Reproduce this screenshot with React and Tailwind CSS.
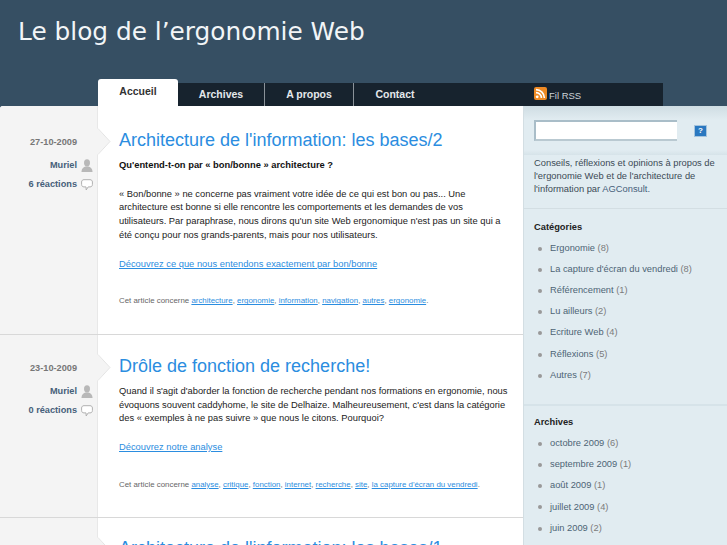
import React from "react";

const posts = [
  {
    date: "27-10-2009",
    reactions: "6 réactions",
    title: "Architecture de l'information: les bases/2",
    lead: "Qu'entend-t-on par « bon/bonne » architecture ?",
    text: "« Bon/bonne » ne concerne pas vraiment votre idée de ce qui est bon ou pas... Une\narchitecture est bonne si elle rencontre les comportements et les demandes de vos\nutilisateurs. Par paraphrase, nous dirons qu'un site Web ergonomique n'est pas un site qui a\nété conçu pour nos grands-parents, mais pour nos utilisateurs.",
    more: "Découvrez ce que nous entendons exactement par bon/bonne",
    tags: ["architecture", "ergonomie", "information", "navigation", "autres", "ergonomie"],
  },
  {
    date: "23-10-2009",
    reactions: "0 réactions",
    title: "Drôle de fonction de recherche!",
    text: "Quand il s'agit d'aborder la fonction de recherche pendant nos formations en ergonomie, nous\névoquons souvent caddyhome, le site de Delhaize. Malheureusement, c'est dans la catégorie\ndes « exemples à ne pas suivre » que nous le citons. Pourquoi?",
    more: "Découvrez notre analyse",
    tags: ["analyse", "critique", "fonction", "internet", "recherche", "site", "la capture d'écran du vendredi"],
  },
];

const categories = [
  ["Ergonomie", 8],
  ["La capture d'écran du vendredi", 8],
  ["Référencement", 1],
  ["Lu ailleurs", 2],
  ["Ecriture Web", 4],
  ["Réflexions", 5],
  ["Autres", 7],
];

const archives = [
  ["octobre 2009", 6],
  ["septembre 2009", 1],
  ["août 2009", 1],
  ["juillet 2009", 4],
  ["juin 2009", 2],
  ["mai 2009", 3],
];

function Arrow({ first }) {
  return (
    <svg className={first ? "absolute left-[97px] top-[22px]" : "absolute left-[97px] top-[19px]"} width="14" height="27" viewBox="0 0 14 27">
      <path d="M0 0 L13 13.5 L0 27 Z" fill="#f4f4f4" />
      <path d="M1 0.5 L13 13.5 L1 26.5" fill="none" stroke="#e4e4e4" />
    </svg>
  );
}

function PersonIcon() {
  return (
    <svg width="12" height="13" viewBox="0 0 12 13" className="shrink-0">
      <ellipse cx="6" cy="3.8" rx="3" ry="3.6" fill="#b8b8b8" />
      <path d="M0.5 13 C0.5 9 3 8 4.5 7.5 L7.5 7.5 C9 8 11.5 9 11.5 13 Z" fill="#b8b8b8" />
    </svg>
  );
}

function BubbleIcon() {
  return (
    <svg width="12" height="12" viewBox="0 0 12 12" className="shrink-0">
      <path d="M3 0.7 H9 C10.5 0.7 11.4 1.6 11.4 3 V5.5 C11.4 7 10.5 7.9 9 7.9 H7.2 L5.2 11 L5 7.9 H3 C1.5 7.9 0.6 7 0.6 5.5 V3 C0.6 1.6 1.5 0.7 3 0.7 Z" fill="#ffffff" stroke="#b0b0b0" />
    </svg>
  );
}

function Post({ post, first }) {
  return (
    <div className="flex border-b border-[#d8d8d8] relative">
      <Arrow first={first} />
      <div className={`w-[98px] shrink-0 bg-[#f4f4f4] border-r border-[#e8e8e8] pr-[4px] text-right text-[9.2px] font-bold ${first ? "pt-[30px]" : "pt-[27px]"}`}>
        <div className="pr-[16px] text-[#777777] mb-[9px] leading-[12px]">{post.date}</div>
        <div className="flex justify-end items-center gap-[4px] text-[#46607a] h-[17px]">
          Muriel
          <PersonIcon />
        </div>
        <div className="flex justify-end items-center gap-[4px] text-[#46607a] h-[20px] mt-[1px]">
          {post.reactions}
          <BubbleIcon />
        </div>
      </div>
      <div className={`pl-[21px] pb-[26px] flex-1 min-w-0 ${first ? "pt-[22px]" : "pt-[19px]"}`}>
        <h2 className="text-[18px] leading-[24px] text-[#2b8de0] whitespace-nowrap">{post.title}</h2>
        <div className="mt-[7px] text-[9.35px] leading-[13.7px] text-[#222222] whitespace-nowrap">
          {post.lead && <p className="font-bold mb-[15px] text-[#111111]">{post.lead}</p>}
          <p className="whitespace-pre-line">{post.text}</p>
          <p className="mt-[15px] text-[#2b8de0] underline">{post.more}</p>
          <p className="mt-[23px] text-[7.9px] text-[#666666]">
            Cet article concerne{" "}
            {post.tags.map((tag, i) => (
              <span key={i}>
                <span className="text-[#2b8de0] underline">{tag}</span>
                {i < post.tags.length - 1 ? ", " : "."}
              </span>
            ))}
          </p>
        </div>
      </div>
    </div>
  );
}

function SideList({ title, items }) {
  return (
    <div>
      <h3 className="text-[9.3px] font-bold text-[#222222] leading-[12px]">{title}</h3>
      <ul className="mt-[5px] pl-[4px]">
        {items.map(([name, count]) => (
          <li key={name} className="flex items-center h-[21.2px] text-[9.3px] text-[#4d6475] whitespace-nowrap">
            <span className="w-[4px] h-[4px] rounded-full bg-[#999999] mr-[8px] shrink-0" />
            <span>
              {name} <span className="text-[#7b7b7b]">({count})</span>
            </span>
          </li>
        ))}
      </ul>
    </div>
  );
}

export default function App() {
  return (
    <div className="h-[545px] w-[727px] overflow-hidden bg-[#364f63] font-['Liberation_Sans',Arial,sans-serif]">
      <header className="h-[106px] flex flex-col">
        <h1 className="pt-[16px] pl-[18px] font-['DejaVu_Sans',sans-serif] text-[24.8px] leading-[32px] text-[#f2f5f7] whitespace-nowrap">
          Le blog de l’ergonomie Web
        </h1>
        <nav className="mt-auto ml-[98px] flex items-end text-[10.5px] font-bold">
          <div className="w-[80px] h-[27px] bg-white rounded-t-[3px] text-[#333333] text-center pt-[5px] leading-[14px]">
            Accueil
          </div>
          <div className="w-[485px] h-[23px] bg-[#17232e] flex items-stretch text-[#e4e8eb]">
            <div className="w-[87px] border-r border-[#8a9299] text-center leading-[23px]">Archives</div>
            <div className="w-[89px] border-r border-[#8a9299] text-center leading-[23px]">A propos</div>
            <div className="w-[82px] text-center leading-[23px]">Contact</div>
            <div className="ml-[98px] flex items-center gap-[2px] text-[9.5px] font-normal text-[#ccd3d8]">
              <svg width="13" height="13" viewBox="0 0 13 13" className="-mt-[2px]">
                <rect width="13" height="13" rx="2" fill="#ee8a24" />
                <circle cx="3.2" cy="9.8" r="1.4" fill="#fff" />
                <path d="M2 5.6a5.4 5.4 0 0 1 5.4 5.4M2 2.6A8.4 8.4 0 0 1 10.4 11" fill="none" stroke="#fff" strokeWidth="1.6" />
              </svg>
              <span className="mt-[3px]">Fil RSS</span>
            </div>
          </div>
        </nav>
      </header>
      <div className="flex h-[439px] bg-white rounded-tl-[3px] overflow-hidden">
        <main className="w-[523px] shrink-0">
          {posts.map((post, i) => (
            <Post key={post.date} post={post} first={i === 0} />
          ))}
          <div className="flex h-[40px] relative">
            <Arrow />
            <div className="w-[98px] shrink-0 bg-[#f4f4f4] border-r border-[#e8e8e8]" />
            <h2 className="pl-[21px] pt-[18px] text-[18px] leading-[24px] text-[#2b8de0] whitespace-nowrap">
              Architecture de l'information: les bases/1
            </h2>
          </div>
        </main>
        <aside className="flex-1 bg-[#e1ecf1] border-l border-[#d3dee3]">
          <div className="h-[14px] bg-gradient-to-b from-[#cfdde3] to-[#e1ecf1]" />
          <div className="pl-[10px] flex items-center">
            <input className="w-[143px] h-[21px] bg-white border-2 border-r-0 border-[#a9bdc8] border-b-[#b9c9d1]" aria-label="Recherche" />
            <span className="ml-[17px] w-[13px] h-[12px] bg-[#2a78c0] border border-[#a5c4dd] text-white text-[8px] font-bold leading-[10px] text-center">
              ?
            </span>
          </div>
          <div className="mt-[9px] h-[5px] bg-gradient-to-b from-[#e1ecf1] to-[#d6e3e9]" />
          <p className="pl-[10px] pt-[2px] pb-[12px] text-[9.35px] leading-[13px] text-[#3b4a55] whitespace-pre-line">
            {"Conseils, réflexions et opinions à propos de\nl'ergonomie Web et de l'architecture de\nl'information par "}
            <span className="text-[#46607a]">AGConsult.</span>
          </p>
          <div className="border-t border-[#d3dee3] pt-[12px] pl-[10px] pb-[18px]">
            <SideList title="Catégories" items={categories} />
          </div>
          <div className="border-t-2 border-[#d6e3e9] pt-[10px] pl-[10px]">
            <SideList title="Archives" items={archives} />
          </div>
        </aside>
      </div>
    </div>
  );
}
